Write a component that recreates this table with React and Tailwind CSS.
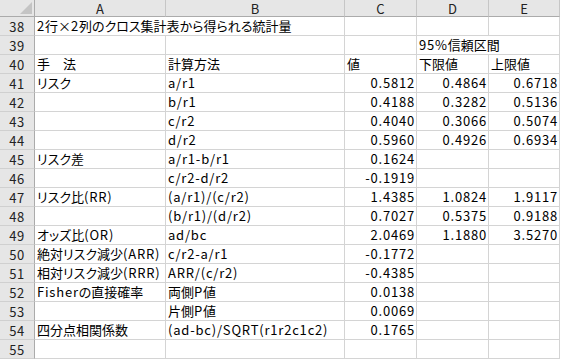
const FONT = { fontFamily: '"Noto Sans CJK JP", "Noto Sans", sans-serif' };

const COLS = ['A', 'B', 'C', 'D', 'E'];

// widths include the 1px right border of each cell
const rows = [
  { n: 38, a: '2行×2列のクロス集計表から得られる統計量', spanAB: true },
  { n: 39, d: '95%信頼区間', spanDE: true },
  { n: 40, a: '手　法', b: '計算方法', c: '値', d: '下限値', e: '上限値' },
  { n: 41, a: 'リスク', b: 'a/r1', c: '0.5812', d: '0.4864', e: '0.6718', num: true },
  { n: 42, b: 'b/r1', c: '0.4188', d: '0.3282', e: '0.5136', num: true },
  { n: 43, b: 'c/r2', c: '0.4040', d: '0.3066', e: '0.5074', num: true },
  { n: 44, b: 'd/r2', c: '0.5960', d: '0.4926', e: '0.6934', num: true },
  { n: 45, a: 'リスク差', b: 'a/r1-b/r1', c: '0.1624', num: true },
  { n: 46, b: 'c/r2-d/r2', c: '-0.1919', num: true },
  { n: 47, a: 'リスク比(RR)', b: '(a/r1)/(c/r2)', c: '1.4385', d: '1.0824', e: '1.9117', num: true },
  { n: 48, b: '(b/r1)/(d/r2)', c: '0.7027', d: '0.5375', e: '0.9188', num: true },
  { n: 49, a: 'オッズ比(OR)', b: 'ad/bc', c: '2.0469', d: '1.1880', e: '3.5270', num: true },
  { n: 50, a: '絶対リスク減少(ARR)', b: 'c/r2-a/r1', c: '-0.1772', num: true },
  { n: 51, a: '相対リスク減少(RRR)', b: 'ARR/(c/r2)', c: '-0.4385', num: true },
  { n: 52, a: 'Fisherの直接確率', b: '両側P値', c: '0.0138', num: true },
  { n: 53, b: '片側P値', c: '0.0069', num: true },
  { n: 54, a: '四分点相関係数', b: '(ad-bc)/SQRT(r1r2c1c2)', c: '0.1765', num: true },
  { n: 55 },
];

// latin runs are set wider, like the sheet's gothic font
function Text({ value }) {
  if (!value) return null;
  return value.split(/([\x20-\x7e]+)/).map((part, i) =>
    /^[\x20-\x7e]+$/.test(part) ? (
      <span key={i} className="tracking-[0.8px]">
        {part}
      </span>
    ) : (
      <span key={i}>{part}</span>
    ),
  );
}

function Cell({ value, right, span }) {
  return (
    <div
      className={`flex h-[19px] items-center overflow-visible whitespace-nowrap border-b border-r border-[#d4d4d4] bg-white text-[13px] leading-[18px] text-black [font-feature-settings:'palt'] ${
        right ? 'justify-end pr-[1px] pl-[2px]' : 'justify-start px-[2px]'
      } ${span ? 'col-span-2' : ''}`}
    >
      <Text value={value} />
    </div>
  );
}

export default function App() {
  return (
    <div className="h-[360px] w-[561px] bg-white" style={FONT}>
      <div className="grid w-[560px] grid-cols-[35px_131px_179px_72px_72px_71px]">
        <div className="relative h-[17px] border-b border-r border-[#ababab] bg-[#e6e6e6]">
          <svg className="absolute right-[2px] bottom-[2px]" width="12" height="12" viewBox="0 0 12 12">
            <polygon points="12,0 12,12 0,12" fill="#c4c4c4" />
          </svg>
        </div>
        {COLS.map((c) => (
          <div
            key={c}
            className="flex h-[17px] items-center justify-center border-b border-r border-b-[#ababab] border-r-[#c6c6c6] bg-[#e6e6e6] text-[13px] leading-none text-[#222]"
          >
            {c}
          </div>
        ))}

        {rows.map((r) => (
          <div key={r.n} className="contents">
            <div className="flex h-[19px] items-center justify-center border-b border-r border-b-[#d0d0d0] border-r-[#ababab] bg-[#e6e6e6] text-[13px] leading-none tracking-[0.5px] text-[#222]">
              {r.n}
            </div>
            {r.spanAB ? (
              <Cell span value={r.a} />
            ) : (
              <>
                <Cell value={r.a} />
                <Cell value={r.b} />
              </>
            )}
            <Cell right={r.num} value={r.c} />
            {r.spanDE ? (
              <Cell span value={r.d} />
            ) : (
              <>
                <Cell right={r.num} value={r.d} />
                <Cell right={r.num} value={r.e} />
              </>
            )}
          </div>
        ))}
      </div>
    </div>
  );
}
